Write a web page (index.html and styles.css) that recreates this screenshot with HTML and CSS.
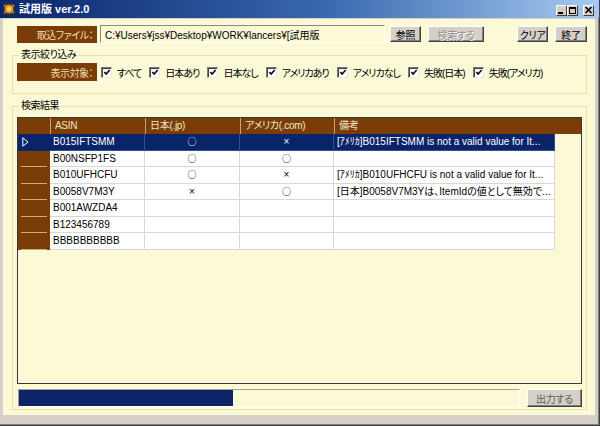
FILE: index.html
```html
<!DOCTYPE html>
<html lang="ja">
<head>
<meta charset="utf-8">
<title>試用版 ver.2.0</title>
<link rel="stylesheet" href="styles.css">
</head>
<body>
<div class="window">
  <div class="titlebar">
    <svg class="app-icon" viewBox="0 0 12 12" width="12" height="12">
      <rect x="0.5" y="0.5" width="11" height="11" rx="2" fill="#5a3a12"/>
      <circle cx="6" cy="6" r="4.2" fill="#d9962a"/>
      <circle cx="6" cy="6" r="2.2" fill="#f4d67a"/>
      <path d="M1 2 L3 4 M11 2 L9 4 M1 10 L3 8 M11 10 L9 8" stroke="#f0c060" stroke-width="1"/>
    </svg>
    <span class="title">試用版 ver.2.0</span>
    <div class="caption-buttons">
      <span class="cbtn"><svg viewBox="0 0 9 8" width="9" height="8"><rect x="1" y="6" width="5" height="2" fill="#000"/></svg></span>
      <span class="cbtn"><svg viewBox="0 0 9 8" width="9" height="8"><rect x="1.5" y="1.5" width="6" height="6" fill="none" stroke="#000"/><rect x="1" y="1" width="7" height="2" fill="#000"/></svg></span>
      <span class="cbtn cbtn-close"><svg viewBox="0 0 9 8" width="9" height="8"><path d="M1.5 1 L7.5 7 M7.5 1 L1.5 7" stroke="#000" stroke-width="1.6"/></svg></span>
    </div>
  </div>

  <div class="client">
    <div class="toprow">
      <div class="caption">取込ファイル：</div>
      <div class="path">C:¥Users¥jss¥Desktop¥WORK¥lancers¥[試用版</div>
      <button class="btn btn-ref">参照</button>
      <button class="btn btn-search" disabled>検索する</button>
      <button class="btn btn-clear">クリア</button>
      <button class="btn btn-quit">終了</button>
    </div>

    <div class="group group-filter">
      <span class="group-title">表示絞り込み</span>
      <div class="filter-row">
        <div class="caption caption-tall">表示対象：</div>
        <div class="checks">
          <span class="chk"><span class="box"><svg viewBox="0 0 9 9" width="9" height="9"><path d="M1.5 4 L3.5 6.3 L7.5 1.8" fill="none" stroke="#000" stroke-width="1.7"/></svg></span>すべて</span>
          <span class="chk"><span class="box"><svg viewBox="0 0 9 9" width="9" height="9"><path d="M1.5 4 L3.5 6.3 L7.5 1.8" fill="none" stroke="#000" stroke-width="1.7"/></svg></span>日本あり</span>
          <span class="chk"><span class="box"><svg viewBox="0 0 9 9" width="9" height="9"><path d="M1.5 4 L3.5 6.3 L7.5 1.8" fill="none" stroke="#000" stroke-width="1.7"/></svg></span>日本なし</span>
          <span class="chk"><span class="box"><svg viewBox="0 0 9 9" width="9" height="9"><path d="M1.5 4 L3.5 6.3 L7.5 1.8" fill="none" stroke="#000" stroke-width="1.7"/></svg></span>アメリカあり</span>
          <span class="chk"><span class="box"><svg viewBox="0 0 9 9" width="9" height="9"><path d="M1.5 4 L3.5 6.3 L7.5 1.8" fill="none" stroke="#000" stroke-width="1.7"/></svg></span>アメリカなし</span>
          <span class="chk"><span class="box"><svg viewBox="0 0 9 9" width="9" height="9"><path d="M1.5 4 L3.5 6.3 L7.5 1.8" fill="none" stroke="#000" stroke-width="1.7"/></svg></span>失敗(日本)</span>
          <span class="chk"><span class="box"><svg viewBox="0 0 9 9" width="9" height="9"><path d="M1.5 4 L3.5 6.3 L7.5 1.8" fill="none" stroke="#000" stroke-width="1.7"/></svg></span>失敗(アメリカ)</span>
        </div>
      </div>
    </div>

    <div class="group group-results">
      <span class="group-title">検索結果</span>
      <div class="grid">
        <div class="grow ghead">
          <div class="rh"></div>
          <div class="hc">ASIN</div>
          <div class="hc">日本(.jp)</div>
          <div class="hc">アメリカ(.com)</div>
          <div class="hc">備考</div>
        </div>
        <div class="grow sel">
          <div class="rh"><svg viewBox="0 0 7 10" width="7" height="10"><path d="M0.8 0.8 L6 5 L0.8 9.2 Z" fill="none" stroke="#fff" stroke-width="1"/></svg></div>
          <div class="c">B015IFTSMM</div>
          <div class="c mark"><span class="o">○</span></div>
          <div class="c mark">×</div>
          <div class="c">[ｱﾒﾘｶ]B015IFTSMM is not a valid value for It...</div>
        </div>
        <div class="grow">
          <div class="rh"></div>
          <div class="c">B00NSFP1FS</div>
          <div class="c mark"><span class="o">○</span></div>
          <div class="c mark"><span class="o">○</span></div>
          <div class="c"></div>
        </div>
        <div class="grow">
          <div class="rh"></div>
          <div class="c">B010UFHCFU</div>
          <div class="c mark"><span class="o">○</span></div>
          <div class="c mark">×</div>
          <div class="c">[ｱﾒﾘｶ]B010UFHCFU is not a valid value for It...</div>
        </div>
        <div class="grow">
          <div class="rh"></div>
          <div class="c">B0058V7M3Y</div>
          <div class="c mark">×</div>
          <div class="c mark"><span class="o">○</span></div>
          <div class="c">[日本]B0058V7M3Yは、ItemIdの値として無効で...</div>
        </div>
        <div class="grow">
          <div class="rh"></div>
          <div class="c">B001AWZDA4</div>
          <div class="c"></div>
          <div class="c"></div>
          <div class="c"></div>
        </div>
        <div class="grow">
          <div class="rh"></div>
          <div class="c">B123456789</div>
          <div class="c"></div>
          <div class="c"></div>
          <div class="c"></div>
        </div>
        <div class="grow">
          <div class="rh"></div>
          <div class="c">BBBBBBBBBB</div>
          <div class="c"></div>
          <div class="c"></div>
          <div class="c"></div>
        </div>
      </div>
      <div class="progress-row">
        <div class="track"><div class="bar" style="width:214px"></div></div>
        <button class="btn btn-out">出力する</button>
      </div>
    </div>
  </div>
</div>
</body>
</html>
```

FILE: styles.css
```css
* {
  box-sizing: border-box;
}

html,
body {
  margin: 0;
  padding: 0;
}

body {
  width: 600px;
  height: 426px;
  overflow: hidden;
  background: #d4d0c8;
  font-family: "Liberation Sans", "Noto Sans CJK JP", sans-serif;
  font-size: 10px;
  font-feature-settings: "palt";
  color: #000;
}

.window {
  width: 600px;
  height: 426px;
  display: flex;
  flex-direction: column;
  background: #d4d0c8;
  border-right: 1px solid #404040;
  border-bottom: 1px solid #404040;
  box-shadow: inset -1px -1px 0 #808080;
}

/* title bar */
.titlebar {
  height: 18px;
  flex: none;
  display: flex;
  align-items: center;
  padding: 0 5px 0 3px;
  background: linear-gradient(to right, #0a246a 0%, #3a6ab0 55%, #a6caf0 100%);
}

.app-icon {
  display: block;
  margin-right: 4px;
}

.title {
  color: #fff;
  font-weight: bold;
  font-size: 11px;
  line-height: 14px;
}

.caption-buttons {
  margin-left: auto;
  margin-top: 2px;
  display: flex;
}

.cbtn {
  width: 11px;
  height: 11px;
  background: #d4d0c8;
  border: 1px solid;
  border-color: #fff #404040 #404040 #fff;
  display: flex;
  align-items: center;
  justify-content: center;
}

.cbtn svg {
  display: block;
}

.cbtn-close {
  margin-left: 5px;
}

/* client area */
.client {
  flex: none;
  height: 396px;
  margin: 1px 4px 0 3px;
  background: #fcfad6;
  display: flex;
  flex-direction: column;
}

.toprow {
  display: flex;
  align-items: center;
  height: 18px;
  margin: 6px 0 0 14px;
}

.caption {
  flex: none;
  width: 80px;
  height: 17px;
  background: #7a3d08;
  color: #f2dcae;
  display: flex;
  align-items: center;
  justify-content: flex-end;
  padding-right: 4px;
  white-space: nowrap;
  letter-spacing: -0.5px;
}

.caption-tall {
  height: 18px;
}

.path {
  flex: none;
  width: 285px;
  height: 18px;
  margin-left: 3px;
  border-top: 1px solid #8a8a80;
  border-left: 1px solid #8a8a80;
  border-right: 1px solid #fff;
  border-bottom: 1px solid #fff;
  padding-left: 4px;
  display: flex;
  align-items: center;
  white-space: nowrap;
  overflow: hidden;
}

.btn {
  flex: none;
  font: inherit;
  height: 16px;
  padding: 0;
  margin: 0;
  background: #d4d0c8;
  color: #000;
  border: 1px solid;
  border-color: #fff #404040 #404040 #fff;
  box-shadow: inset -1px -1px 0 #808080;
  display: flex;
  align-items: center;
  justify-content: center;
  white-space: nowrap;
  letter-spacing: -0.3px;
}

.btn-ref {
  width: 31px;
  margin-left: 5px;
}

.btn-search {
  width: 56px;
  margin-left: 7px;
  color: #8c8c8c;
  text-shadow: 1px 1px 0 #fff;
}

.btn-clear {
  width: 31px;
  margin-left: 33px;
}

.btn-quit {
  width: 32px;
  margin-left: 7px;
}

/* group boxes */
.group {
  position: relative;
  border: 1px solid #e6e0a6;
  margin: 0 8px 0 9px;
}

.group-title {
  position: absolute;
  left: 6px;
  top: -8px;
  padding: 0 2px;
  line-height: 14px;
  background: #fcfad6;
  letter-spacing: -0.5px;
}

.group-filter {
  margin-top: 12px;
  padding: 7px 4px 12px 4px;
}

.filter-row {
  display: flex;
  align-items: center;
  height: 18px;
}

.checks {
  flex: none;
  display: flex;
  align-items: center;
  gap: 8px;
  margin-left: 4px;
}

.chk {
  flex: none;
  display: flex;
  align-items: center;
  gap: 5px;
  white-space: nowrap;
  letter-spacing: -1px;
}

.box {
  flex: none;
  width: 11px;
  height: 11px;
  background: #fff;
  border: 1px solid;
  border-color: #7a7a7a #e8e8e8 #e8e8e8 #7a7a7a;
  box-shadow: inset 1px 1px 0 #404040;
  display: flex;
  align-items: center;
  justify-content: center;
}

.box svg {
  display: block;
  margin: 1px 0 0 1px;
}

.group-results {
  margin-top: 12px;
  padding: 10px 4px 2px 4px;
}

/* data grid */
.grid {
  height: 267px;
  border: 1px solid #383838;
  background: #fcfad6;
  overflow: hidden;
}

.grow {
  display: grid;
  grid-template-columns: 32px 95px 95px 94px 221px;
  height: 16.5px;
  line-height: 16px;
}

.grow.ghead {
  height: 16px;
  background: #7a3d08;
  color: #f4e6c4;
}

.hc {
  border-left: 1px solid #c9a46a;
  padding-left: 4px;
  white-space: nowrap;
  overflow: hidden;
  letter-spacing: -0.3px;
}

.rh {
  background-color: #7a3d08;
  background-image: linear-gradient(#cfae72, #cfae72);
  background-size: calc(100% - 6px) 1px;
  background-position: 3px 100%;
  background-repeat: no-repeat;
  display: flex;
  align-items: center;
  padding-left: 4px;
}

.ghead .rh {
  background-image: none;
}

.c {
  background: #fff;
  border-right: 1px solid #d8d8d8;
  border-bottom: 1px solid #d8d8d8;
  padding-left: 3px;
  white-space: nowrap;
  overflow: hidden;
}

.mark {
  text-align: center;
  padding-left: 0;
}

.o {
  font-family: "Noto Sans CJK JP", sans-serif;
  font-size: 9px;
}

.sel .c {
  background: #0a246a;
  color: #fff;
  border-color: #33508c;
}

.sel .rh {
  background-color: #0a246a;
  background-image: none;
}

.rh svg {
  display: block;
}

/* progress */
.progress-row {
  display: flex;
  height: 18px;
  margin-top: 5px;
}

.track {
  flex: none;
  width: 502px;
  height: 18px;
  margin-left: 1px;
  border-top: 1px solid #a0a0a0;
  border-left: 1px solid #a0a0a0;
  border-right: 1px solid #fff;
  border-bottom: 1px solid #fff;
}

.bar {
  height: 100%;
  background: #0c2568;
}

.btn-out {
  width: 55px;
  height: 18px;
  margin-left: 7px;
  color: #5c5c5c;
}
```
